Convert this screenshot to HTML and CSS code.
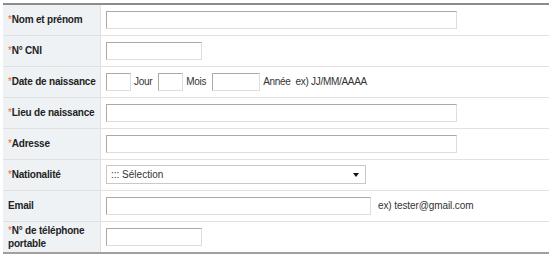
FILE: index.html
```html
<!DOCTYPE html>
<html lang="fr">
<head>
    <meta charset="UTF-8">
    <title>Inscription</title>
    <link rel="stylesheet" href="styles.css">
</head>
<body>
    <table class="form-table">
        <tr>
            <th><span class="req">*</span>Nom et prénom</th>
            <td><input type="text" class="w-long"></td>
        </tr>
        <tr>
            <th><span class="req">*</span>N° CNI</th>
            <td><input type="text" class="w-short"></td>
        </tr>
        <tr>
            <th><span class="req">*</span>Date de naissance</th>
            <td>
                <div class="inline-row">
                    <input type="text" class="w-day"><span class="unit">Jour</span>
                    <input type="text" class="w-day"><span class="unit">Mois</span>
                    <input type="text" class="w-year"><span class="unit">Année</span>
                    <span class="hint">ex) JJ/MM/AAAA</span>
                </div>
            </td>
        </tr>
        <tr>
            <th><span class="req">*</span>Lieu de naissance</th>
            <td><input type="text" class="w-long"></td>
        </tr>
        <tr>
            <th><span class="req">*</span>Adresse</th>
            <td><input type="text" class="w-long"></td>
        </tr>
        <tr>
            <th><span class="req">*</span>Nationalité</th>
            <td>
                <div class="select">
                    <span>::: Sélection</span>
                    <span class="arrow"></span>
                </div>
            </td>
        </tr>
        <tr>
            <th>Email</th>
            <td>
                <div class="inline-row">
                    <input type="text" class="w-mail"><span class="hint mail">ex) tester@gmail.com</span>
                </div>
            </td>
        </tr>
        <tr class="tall">
            <th><span class="req">*</span>N° de téléphone<br>portable</th>
            <td><input type="text" class="w-short"></td>
        </tr>
    </table>
</body>
</html>
```

FILE: styles.css
```css
body {
    margin: 3px;
    font-family: 'Liberation Sans', Arial, sans-serif;
    font-size: 10px;
    color: #333;
    background-color: #fff;
}
.form-table {
    width: 546px;
    table-layout: fixed;
    border-collapse: collapse;
    border-top: 2px solid #8c8c8c;
    border-bottom: 2px solid #a0a0a0;
}
.form-table tr {
    height: 31px;
    border-bottom: 1px solid #e1e1e1;
}
.form-table tr.tall {
    height: 32px;
}
.form-table th {
    width: 92px;
    padding: 0 0 0 5px;
    background-color: #eef2f5;
    border-right: 1px solid #e1e1e1;
    text-align: left;
    font-weight: bold;
    font-size: 10px;
    letter-spacing: -0.2px;
    line-height: 13px;
    white-space: nowrap;
    color: #222;
}
.form-table td {
    padding: 0 0 0 5px;
    vertical-align: middle;
}
.req {
    color: #f26c21;
    font-weight: normal;
}
.form-table input {
    box-sizing: border-box;
    height: 18px;
    margin: 0;
    padding: 0 3px;
    border: 1px solid;
    border-color: #a9a9a9 #dedede #dedede #a9a9a9;
    vertical-align: middle;
    font-family: inherit;
    font-size: 11px;
}
.w-long { width: 351px; }
.w-short { width: 96px; }
.w-day { width: 25px; }
.w-year { width: 48px; }
.w-mail { width: 265px; }
.inline-row {
    display: flex;
    align-items: center;
}
.unit {
    margin: 0 6px 0 3px;
    letter-spacing: -0.3px;
}
.hint {
    margin-left: -1px;
    letter-spacing: -0.3px;
}
.hint.mail {
    margin-left: 7px;
    letter-spacing: -0.1px;
}
.select {
    box-sizing: border-box;
    width: 260px;
    height: 19px;
    padding: 0 6px 0 4px;
    border: 1px solid #c8c8c8;
    display: flex;
    align-items: center;
    justify-content: space-between;
    font-size: 10px;
}
.arrow {
    width: 0;
    height: 0;
    border-left: 3px solid transparent;
    border-right: 3px solid transparent;
    border-top: 4px solid #111;
}
```
